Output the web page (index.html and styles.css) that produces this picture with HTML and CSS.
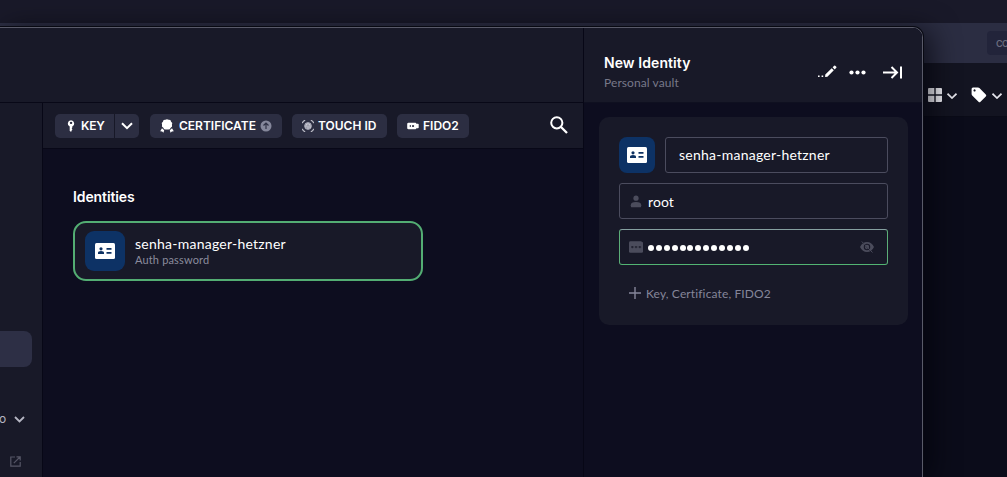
FILE: index.html
```html
<!DOCTYPE html>
<html lang="en">
<head>
<meta charset="utf-8">
<title>Identities</title>
<link rel="stylesheet" href="styles.css">
</head>
<body>
<div class="app">
  <div class="app-title"></div>
  <div class="app-tabs"><div class="connect">CO</div></div>
  <div class="app-tools">
    <svg class="i-grid" width="14" height="14" viewBox="0 0 14 14"><path fill="#f0f0f6" d="M1 0h5.300v6.300H0V1q0-1 1-1zM7.700 0H13q1 0 1 1v5.300H7.700zM0 7.700h6.300V14H1q-1 0-1-1zM7.700 7.700H14V13q0 1-1 1H7.700z"/></svg>
    <svg class="i-chev" width="10" height="6" viewBox="0 0 10 6"><path class="stroke" d="M.5.700L5 5 9.500.700"/></svg>
    <svg class="i-tag" width="16" height="16" viewBox="0 0 16 16"><path fill="#fff" fill-rule="evenodd" d="M2 .5h5q.8 0 1.400.6l6.400 6.300q1 1 0 2L9.500 14.700q-1 1-2 0L1.200 8.400Q.6 7.800.6 7V2Q.6.500 2 .5zM3.500 2.300a1.100 1.100 0 1 0 .1 0z"/></svg>
    <svg class="i-chev" width="10" height="6" viewBox="0 0 10 6"><path class="stroke" d="M.5.700L5 5 9.500.700"/></svg>
  </div>
  <div class="app-body"></div>
</div>

<div class="modal">
  <section class="main">
    <header class="main-head"></header>
    <div class="columns">
      <aside class="side">
        <div class="side-active"></div>
        <div class="side-item"><span>o</span><svg width="11" height="7" viewBox="0 0 11 7"><path class="stroke-dim" d="M1 1l4.500 4.500L10 1"/></svg></div>
        <svg class="i-ext" width="11" height="11" viewBox="0 0 11 11"><path fill="none" stroke="#555666" stroke-width="1.200" d="M5 1H.8v9.200h9.400V6M6.500.8h3.700v3.700M10 1L3.800 7.200"/></svg>
      </aside>
      <div class="content">
        <div class="toolbar">
          <div class="btn split">
            <span class="key"><svg width="8" height="12" viewBox="0 0 8 12"><path fill="#fff" fill-rule="evenodd" d="M4 .3a3.300 3.300 0 0 1 1.300 6.300v1l-.6.800.8.900-.8.900v.8L4 11.800l-1.300-.9V6.600A3.300 3.300 0 0 1 4 .3zM4 1.700a1.200 1.200 0 1 0 .1 0z"/></svg><b class="t-key">KEY</b></span>
            <span class="drop"><svg width="12" height="8" viewBox="0 0 12 8"><path fill="none" stroke="#fff" stroke-width="2" d="M1 1.200l5 5 5-5"/></svg></span>
          </div>
          <div class="btn cert"><svg width="14" height="14" viewBox="0 0 14 14"><path fill="#fff" d="M7 .2l1.600.6 1.800.3.700 1.600 1.200 1.400-.4 1.700.2 1.700-1.400 1.300-.9 1.400-1.400.3H5.600l-1.400-.3-.9-1.400-1.400-1.300.2-1.700-.4-1.700 1.200-1.400.7-1.600L5.400.8zM2 9.300l2.200 1.900-.8 2.500-1.200-1.200-2-.3zM12 9.300l-2.200 1.900.8 2.500 1.200-1.200 2-.3z"/></svg><b class="t-cert">CERTIFICATE</b><svg width="12" height="12" viewBox="0 0 12 12"><circle cx="6" cy="6" r="5.500" fill="#85879b"/><path fill="none" stroke="#303247" stroke-width="1.200" d="M6 9V3.300M3.500 5.500L6 3l2.500 2.500"/></svg></div>
          <div class="btn touch"><svg width="12" height="12" viewBox="0 0 12 12" fill="none" stroke="#e6e6ee"><path d="M.5 3.200Q.5.500 3.200.5M8.800.5q2.700 0 2.700 2.700M11.500 8.800q0 2.700-2.700 2.700M3.200 11.500Q.5 11.500.5 8.800"/><circle cx="6" cy="6" r="3.400" fill="#8d8e9e" stroke="#b9bac6" stroke-width=".8"/><path stroke-width=".8" d="M4 7.500V5.800a2 2 0 0 1 4 0V8M6 5.500v3.400"/></svg><b class="t-touch">TOUCH ID</b></div>
          <div class="btn fido"><svg width="12" height="8" viewBox="0 0 12 8"><path fill="#fff" fill-rule="evenodd" d="M1.500.7h6.800q1 0 1 1H11q.7 0 .7.700v3.200q0 .7-.7.700H9.300q0 1-1 1H1.500Q.2 7.300.2 6V2Q.2.700 1.500.7zM2.800 3v2h1V3zM6 2.900a1.100 1.100 0 1 0 .1 0z"/></svg><b class="t-fido">FIDO2</b></div>
          <svg class="i-search" width="18" height="18" viewBox="0 0 18 18"><circle cx="6.800" cy="6.800" r="5.600" fill="none" stroke="#fff" stroke-width="2"/><path stroke="#fff" stroke-width="2.300" d="M11 11l6 6"/></svg>
        </div>
        <div class="list">
          <h2>Identities</h2>
          <div class="card">
            <div class="avatar big"><svg width="20" height="16" viewBox="0 0 20 16"><rect width="20" height="16" rx="1.500" fill="#fff"/><g fill="#0d3162"><circle cx="6" cy="5.800" r="1.600"/><path d="M3 11V9.700Q3 8 6 8t3 1.700V11zM11.500 5h5v1.700h-5zM11.500 9h5v1.700h-5z"/></g></svg></div>
            <div class="card-text"><div class="name">senha-manager-hetzner</div><div class="kind">Auth password</div></div>
          </div>
        </div>
      </div>
    </div>
  </section>
  <section class="panel">
    <header class="panel-head">
      <div class="titles"><div class="title">New Identity</div><div class="vault">Personal vault</div></div>
      <svg class="i-edit" width="19" height="13" viewBox="0 0 19 13"><path fill="#fff" d="M0 10.500h1.600v1.600H0zM3.600 10.500h1.600v1.600H3.600zM7.300 9.600l6.400-6.400 2.100 2.100-6.400 6.400-2.300.2zM14.600 2.300L16.200.7q.5-.5 1 0l1.100 1.100q.5.500 0 1l-1.600 1.600z"/></svg>
      <svg class="i-dots" width="17" height="5" viewBox="0 0 17 5"><g fill="#fff"><circle cx="2.500" cy="2.500" r="2.100"/><circle cx="8.500" cy="2.500" r="2.100"/><circle cx="14.500" cy="2.500" r="2.100"/></g></svg>
      <svg width="19" height="13" viewBox="0 0 19 13"><path fill="none" stroke="#fff" stroke-width="2" d="M0 6.500h14M8.500 1l5.500 5.500L8.500 12M18 .5v12"/></svg>
    </header>
    <div class="form">
      <div class="row">
        <div class="avatar"><svg width="20" height="16" viewBox="0 0 20 16"><rect width="20" height="16" rx="1.500" fill="#fff"/><g fill="#0d3162"><circle cx="6" cy="5.800" r="1.600"/><path d="M3 11V9.700Q3 8 6 8t3 1.700V11zM11.500 5h5v1.700h-5zM11.500 9h5v1.700h-5z"/></g></svg></div>
        <div class="field label"><span class="name">senha-manager-hetzner</span></div>
      </div>
      <div class="field user"><svg width="12" height="13" viewBox="0 0 12 13"><g fill="#4b4c5c"><circle cx="6" cy="3.200" r="2.600"/><path d="M1.200 12.300Q-.8 7 6 7t4.800 5.300z"/></g></svg><span class="root">root</span></div>
      <div class="field pass"><svg width="14" height="12" viewBox="0 0 14 12"><path fill="#4b4c5c" d="M1.500.3H12L14 1.500v9q0 1.200-1.300 1.200H1.300Q0 11.700 0 10.500V1.700Q0 .3 1.500.3z"/><path stroke="#20202f" d="M2 6h2.700M5.800 6h2.600M9.500 6h2.700M3.300 5v2.200M7 5v2.200M10.800 5v2.200"/></svg>
        <span class="dots"><i></i><i></i><i></i><i></i><i></i><i></i><i></i><i></i><i></i><i></i><i></i><i></i><i></i></span>
        <svg class="i-eye" width="14" height="12" viewBox="0 0 14 12"><path fill="#4b4c5c" d="M0 6Q2.500 1 7 1t7 5q-2.500 5-7 5T0 6z"/><circle cx="7" cy="6" r="2.700" fill="none" stroke="#1a1a2a" stroke-width="1.100"/><path stroke="#1a1a2a" d="M2 1l9.500 10"/><path stroke="#4b4c5c" d="M1.800.5L12.500 11.500"/></svg></div>
      <div class="add"><svg width="12" height="12" viewBox="0 0 12 12"><path stroke="#85869a" stroke-width="1.400" d="M6 0v12M0 6h12"/></svg><span>Key, Certificate, FIDO2</span></div>
    </div>
  </section>
</div>
</body>
</html>
```
FILE: styles.css
```css
* { box-sizing: border-box; }
body { margin: 0; width: 1007px; height: 477px; overflow: hidden; position: relative; background: #0b0c1b; color: #fff; font-family: Lato, "Open Sans", sans-serif; }
svg { display: block; flex: none; }
.stroke { fill: none; stroke: #e5e5ec; stroke-width: 1.7; }
.stroke-dim { fill: none; stroke: #b5b6c3; stroke-width: 1.8; }

.app { display: flex; flex-direction: column; height: 477px; }
.app-title { height: 23px; background: #191929; }
.app-tabs { height: 40px; background: #2b2d42; display: flex; justify-content: flex-end; align-items: center; overflow: hidden; }
.connect { width: 20px; height: 24px; padding-left: 9px; border-radius: 4px 0 0 4px; background: #22243a; color: #6b6c7e; font: 600 9px/25px Inter, sans-serif; overflow: hidden; white-space: nowrap; letter-spacing: -.6px; }
.app-tools { height: 54px; padding: 11px 0 0 928px; background: #131421; border-bottom: 1px solid #0a0b17; display: flex; align-items: center; }
.app-tools .i-chev { margin-left: 5px; margin-top: 2px; }
.app-tools .i-tag { margin-left: 14px; margin-top: -1px; }
.app-body { flex: 1; background: #0b0c1a; }

.modal { position: absolute; left: 0; top: 27px; width: 923px; height: 450px; display: flex; border: 1px solid #595a69; border-width: 1px 1px 0 0; border-radius: 0 10px 0 0; overflow: hidden; background: #0d0d1f; box-shadow: 0 0 0 1px #080912, 8px 3px 28px rgba(0, 0, 8, .65); }
.main { width: 584px; display: flex; flex-direction: column; border-right: 1px solid #070716; }
.main-head { height: 75px; background: #181928; border-bottom: 1px solid #080817; }
.columns { flex: 1; display: flex; }
.side { width: 43px; background: #181928; border-right: 1px solid #070716; padding-top: 228px; }
.side-active { width: 32px; height: 36px; border-radius: 0 8px 8px 0; background: #2d2f45; }
.side-item { display: flex; align-items: center; height: 16px; margin-top: 44px; color: #b5b6c3; font: 12px/16px Inter, sans-serif; }
.side-item svg { margin-left: 8px; }
.side-item span { width: 7px; margin-left: -1px; }
.i-ext { margin: 29px 0 0 10px; }
.content { flex: 1; }
.toolbar { height: 46px; padding: 0 15px 0 12px; background: #181928; border-bottom: 1px solid #080817; display: flex; align-items: center; }
.btn { height: 24px; border-radius: 5px; background: #2c2e42; display: flex; align-items: center; }
.btn b { font: 600 12px/24px Inter, sans-serif; white-space: nowrap; }
.split { width: 84px; }
.key { width: 60px; height: 24px; padding-left: 12px; display: flex; align-items: center; border-right: 1px solid #171827; }
.t-key { margin-left: 6px; }
.btn .t-key { letter-spacing: -.2px; }
.drop { flex: 1; display: flex; justify-content: center; }
.cert { width: 132px; margin-left: 11px; padding-left: 10px; }
.t-cert { width: 77px; margin: 0 4px 0 5px; }
.touch { width: 95px; margin-left: 10px; padding-left: 10px; }
.t-touch { margin-left: 4px; }
.fido { width: 72px; margin-left: 10px; padding-left: 10px; }
.t-fido { margin-left: 4px; }
.i-search { margin: -2px 0 0 auto; }
.list { padding: 39px 30px; }
h2 { margin: 0; font: 600 14px/18px Inter, sans-serif; letter-spacing: -.1px; }
.card { width: 350px; height: 60px; margin-top: 15px; padding: 0 10px; display: flex; align-items: center; border: 2px solid #53ad73; border-radius: 13px; background: #181928; }
.avatar { width: 36px; height: 36px; border-radius: 8px; background: #0d3265; display: flex; align-items: center; justify-content: center; flex: none; }
.avatar.big { width: 40px; height: 40px; border-radius: 9px; }
.card-text { margin-left: 10px; }
.name { font-size: 14px; line-height: 18px; letter-spacing: .24px; white-space: nowrap; }
.kind { font-size: 11px; line-height: 14px; letter-spacing: .16px; color: #8b8c9d; }

.panel { flex: 1; background: #0d0d1f; }
.panel-head { height: 75px; padding: 15px 20px 0 20px; display: flex; align-items: center; background: #181928; border-bottom: 1px solid #0f1020; }
.titles { flex: 1; }
.title { font: 600 14px/20px Inter, sans-serif; letter-spacing: .08px; }
.vault { font-size: 12px; line-height: 20px; letter-spacing: .08px; color: #777889; }
.i-edit { margin: -2px 12px 0 0; }
.i-dots { margin-right: 17px; }
.form { width: 309px; height: 208px; margin: 14px 0 0 15px; padding: 20px; border-radius: 10px; background: #181928; display: flex; flex-direction: column; gap: 10px; }
.row { display: flex; gap: 10px; }
.field { flex: none; height: 36px; border: 1px solid #4b4c5e; border-radius: 3px; display: flex; align-items: center; }
.label.field { flex: 1; padding-left: 13px; }
.user { padding-left: 10px; }
.root { margin-left: 6px; font-size: 14px; letter-spacing: .1px; }
.pass { padding: 0 13px 0 9px; border-color: #85a0a0 #5cae78 #52b473; }
.dots { display: flex; gap: 1.9px; margin: 1px 0 0 5px; }
.dots i { width: 6px; height: 6px; border-radius: 50%; background: #fff; }
.i-eye { margin-left: auto; }
.add { flex: none; padding-left: 10px; height: 36px; display: flex; align-items: center; gap: 5px; color: #85869a; font-size: 12px; letter-spacing: .13px; }
```
